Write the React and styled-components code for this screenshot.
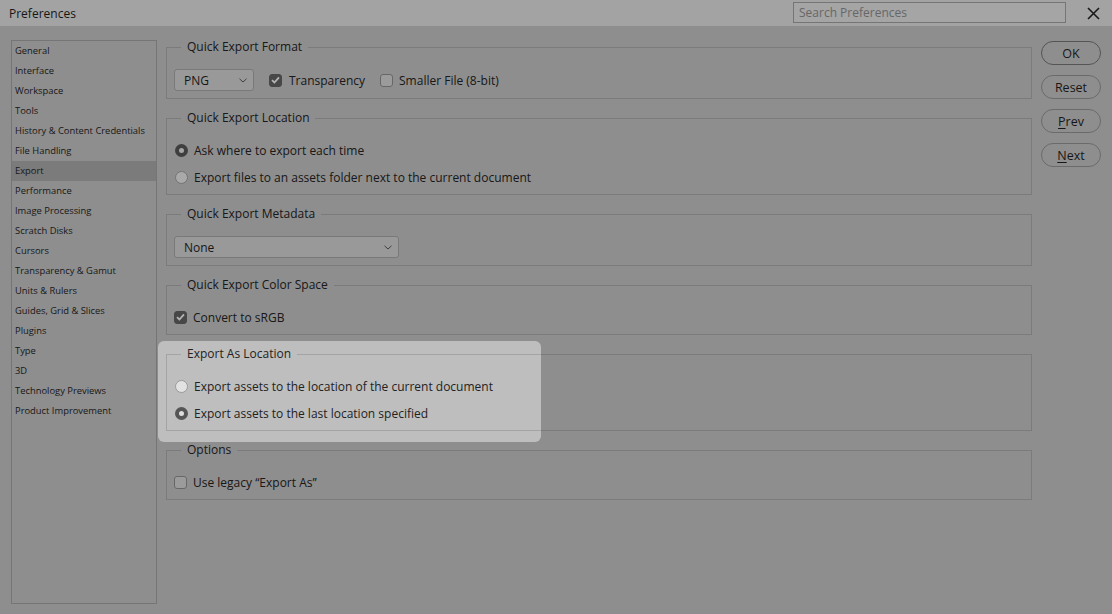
import React from "react";
import styled, { createGlobalStyle } from "styled-components";

const GlobalStyle = createGlobalStyle`
  html, body { margin: 0; padding: 0; background: #8f8f8f; }
  body { font-family: "Open Sans", "Noto Sans", Arial, sans-serif; color: #222; }
  * { box-sizing: border-box; }
`;

const Dialog = styled.div`
  position: relative;
  width: 1112px;
  height: 614px;
  background: #bebebe;
  overflow: hidden;
  display: flex;
  flex-direction: column;
`;

const TitleBar = styled.div`
  height: 26px;
  flex: none;
  display: flex;
  align-items: center;
  padding: 0 12px 0 9px;
  background: #dadada;
`;

const Title = styled.div`
  font-size: 12px;
  color: #1e1e1e;
`;

const Search = styled.div`
  margin-left: auto;
  width: 273px;
  height: 21px;
  margin-top: -2px;
  border: 1px solid #9c9c9c;
  background: #dcdcdc;
  font-size: 12px;
  color: #8a8a8a;
  padding-left: 5px;
  line-height: 19px;
`;

const Close = styled.div`
  width: 13px;
  height: 13px;
  margin-left: 21px;
  display: flex;
`;

const Body = styled.div`
  flex: 1;
  display: flex;
  gap: 9px;
  padding: 0 11px 10px 11px;
`;

const Sidebar = styled.div`
  width: 146px;
  flex: none;
  margin-top: 14px;
  border: 1px solid #9d9d9d;
  display: flex;
  flex-direction: column;
`;

const SideItem = styled.div`
  height: 20px;
  line-height: 20px;
  padding-left: 3px;
  font-size: 9.4px;
  color: #1e1e1e;
  background: ${(p) => (p.$active ? "#a4a4a4" : "transparent")};
  white-space: nowrap;
`;

const Main = styled.div`
  width: 866px;
  flex: none;
  margin-top: 12px;
  display: flex;
  flex-direction: column;
  gap: 10px;
`;

const Group = styled.fieldset`
  margin: 0;
  border: 1px solid #a4a4a4;
  padding: 13px 7px 7px 7px;
  display: flex;
  flex-direction: column;
  gap: 7px;
  min-width: 0;
`;

const Legend = styled.legend`
  margin-left: 7px;
  padding: 0 6px;
  height: 18px;
  line-height: 18px;
  font-size: 12px;
  color: #222;
`;

const Row = styled.div`
  height: ${(p) => (p.$tall ? 22 : 20)}px;
  display: flex;
  align-items: center;
  font-size: 12px;
  color: #222;
`;

const Select = styled.div`
  width: ${(p) => p.$w}px;
  height: 22px;
  border: 1px solid #a2a2a2;
  border-radius: 3px;
  background: #cdcdcd;
  display: flex;
  align-items: center;
  justify-content: space-between;
  padding: 0 6px 0 9px;
  font-size: 12px;
  color: #1e1e1e;
`;

const Check = styled.span`
  width: 13px;
  height: 13px;
  flex: none;
  border-radius: 3px;
  border: 1px solid ${(p) => (p.$on ? "#5f5f5f" : "#8a8a8a")};
  background: ${(p) => (p.$on ? "#5f5f5f" : "#cfcfcf")};
  display: flex;
  align-items: center;
  justify-content: center;
  margin-left: ${(p) => p.$ml || 0}px;
  margin-right: ${(p) => p.$mr || 6}px;
`;

const Radio = styled.span`
  width: 13px;
  height: 13px;
  flex: none;
  margin-left: 1px;
  margin-right: 6px;
  border-radius: 50%;
  border: ${(p) => (p.$on ? "4px solid #555" : "1px solid #9a9a9a")};
  background: ${(p) => (p.$on ? "#dedede" : "#e2e2e2")};
`;

const Buttons = styled.div`
  width: 60px;
  flex: none;
  margin-top: 15px;
  display: flex;
  flex-direction: column;
  gap: 10px;
`;

const Button = styled.div`
  height: 24px;
  border-radius: 12px;
  border: 1px solid ${(p) => (p.$default ? "#707070" : "#8e8e8e")};
  display: flex;
  align-items: center;
  justify-content: center;
  font-size: 12.5px;
  color: #1e1e1e;
  u { text-decoration: underline; text-underline-offset: 2px; }
`;

const Spotlight = styled.div`
  position: absolute;
  left: 158px;
  top: 341px;
  width: 383px;
  height: 101px;
  border-radius: 6px;
  box-shadow: 0 0 0 3000px rgba(0, 0, 0, 0.25);
  pointer-events: none;
`;

const Chevron = () => (
  <svg width="8" height="5" viewBox="0 0 8 5">
    <path d="M0.5 0.8 L4 4 L7.5 0.8" fill="none" stroke="#555" strokeWidth="1" />
  </svg>
);

const Tick = () => (
  <svg width="9" height="8" viewBox="0 0 9 8">
    <path d="M1 4.2 L3.4 6.5 L8 1.3" fill="none" stroke="#f0f0f0" strokeWidth="1.8" />
  </svg>
);

const items = [
  "General", "Interface", "Workspace", "Tools", "History & Content Credentials",
  "File Handling", "Export", "Performance", "Image Processing", "Scratch Disks",
  "Cursors", "Transparency & Gamut", "Units & Rulers", "Guides, Grid & Slices",
  "Plugins", "Type", "3D", "Technology Previews", "Product Improvement",
];

export default function App() {
  return (
    <>
      <GlobalStyle />
      <Dialog>
        <TitleBar>
          <Title>Preferences</Title>
          <Search>Search Preferences</Search>
          <Close>
            <svg width="13" height="13" viewBox="0 0 13 13">
              <path d="M1 1 L12 12 M12 1 L1 12" stroke="#222" strokeWidth="1.6" fill="none" />
            </svg>
          </Close>
        </TitleBar>
        <Body>
          <Sidebar>
            {items.map((t) => (
              <SideItem key={t} $active={t === "Export"}>{t}</SideItem>
            ))}
          </Sidebar>
          <Main>
            <Group>
              <Legend>Quick Export Format</Legend>
              <Row $tall>
                <Select $w={80}>PNG<Chevron /></Select>
                <Check $on $ml={15} $mr={7}><Tick /></Check>
                Transparency
                <Check $ml={15} $mr={6} />
                Smaller File (8-bit)
              </Row>
            </Group>
            <Group>
              <Legend>Quick Export Location</Legend>
              <Row><Radio $on />Ask where to export each time</Row>
              <Row><Radio />Export files to an assets folder next to the current document</Row>
            </Group>
            <Group>
              <Legend>Quick Export Metadata</Legend>
              <Row $tall>
                <Select $w={225}>None<Chevron /></Select>
              </Row>
            </Group>
            <Group>
              <Legend>Quick Export Color Space</Legend>
              <Row><Check $on><Tick /></Check>Convert to sRGB</Row>
            </Group>
            <Group>
              <Legend>Export As Location</Legend>
              <Row><Radio />Export assets to the location of the current document</Row>
              <Row><Radio $on />Export assets to the last location specified</Row>
            </Group>
            <Group>
              <Legend>Options</Legend>
              <Row><Check />Use legacy “Export As”</Row>
            </Group>
          </Main>
          <Buttons>
            <Button $default>OK</Button>
            <Button>Reset</Button>
            <Button><u>P</u>rev</Button>
            <Button><u>N</u>ext</Button>
          </Buttons>
        </Body>
        <Spotlight />
      </Dialog>
    </>
  );
}
